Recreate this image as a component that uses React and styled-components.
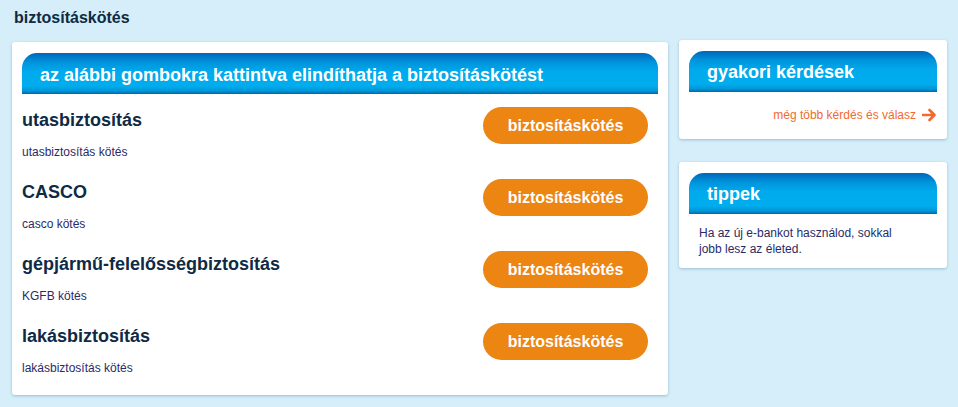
import styled, { createGlobalStyle } from "styled-components";

const GlobalStyle = createGlobalStyle`
	html, body {
		margin: 0;
		padding: 0;
		background: #d5eefa;
		font-family: "Liberation Sans", Arial, sans-serif;
	}
`;

const products = [
	{ title: "utasbiztosítás", sub: "utasbiztosítás kötés" },
	{ title: "CASCO", sub: "casco kötés" },
	{ title: "gépjármű-felelősségbiztosítás", sub: "KGFB kötés" },
	{ title: "lakásbiztosítás", sub: "lakásbiztosítás kötés" },
];

const ArrowIcon = () => (
	<svg width='15' height='14' viewBox='0 0 15 14'>
		<path
			d='M1 7h11M7.5 2l5 5-5 5'
			fill='none'
			stroke='#f26a2e'
			strokeWidth='2.6'
			strokeLinecap='round'
			strokeLinejoin='round'
		/>
	</svg>
);

const App = () => {
	return (
		<Page>
			<GlobalStyle />
			<PageTitle>biztosításkötés</PageTitle>
			<Columns>
				<MainCard>
					<BlueHeader $size='main'>
						az alábbi gombokra kattintva elindíthatja a biztosításkötést
					</BlueHeader>
					<ProductList>
						{products.map((p) => (
							<ProductRow key={p.title}>
								<ProductText>
									<ProductTitle>{p.title}</ProductTitle>
									<ProductSub>{p.sub}</ProductSub>
								</ProductText>
								<OrangeButton>biztosításkötés</OrangeButton>
							</ProductRow>
						))}
					</ProductList>
				</MainCard>
				<SideColumn>
					<SideCard>
						<BlueHeader>gyakori kérdések</BlueHeader>
						<MoreLink>
							még több kérdés és válasz <ArrowIcon />
						</MoreLink>
					</SideCard>
					<SideCard>
						<BlueHeader>tippek</BlueHeader>
						<TipText>
							Ha az új e-bankot használod, sokkal
							<br />
							jobb lesz az életed.
						</TipText>
					</SideCard>
				</SideColumn>
			</Columns>
		</Page>
	);
};

export default App;

const Page = styled.div`
	width: 958px;
	height: 407px;
	box-sizing: border-box;
	padding: 8px 0 0 12px;
`;
const PageTitle = styled.h1`
	margin: 0 0 0 2px;
	font-size: 16px;
	line-height: 20px;
	font-weight: bold;
	color: #0e2a44;
`;
const Columns = styled.div`
	display: flex;
	align-items: flex-start;
	gap: 11px;
	margin-top: 12px;
`;
const Card = styled.div`
	background: #fff;
	border-radius: 3px;
	box-shadow: 0 1px 3px rgba(90, 130, 160, 0.45);
	box-sizing: border-box;
	padding: 11px 10px;
`;
const MainCard = styled(Card)`
	width: 656px;
	height: 353px;
	margin-top: 2px;
`;
const SideColumn = styled.div`
	display: flex;
	flex-direction: column;
	gap: 23px;
`;
const SideCard = styled(Card)`
	width: 268px;
`;
const BlueHeader = styled.div`
	height: 41px;
	box-sizing: border-box;
	padding-left: 18px;
	padding-top: ${(p) => (p.$size === "main" ? "12px" : "11px")};
	border-radius: 15px 15px 0 0;
	background: linear-gradient(
		to bottom,
		#0066b8 0%,
		#0093dc 22%,
		#00aaec 45%,
		#00adee 80%,
		#0098d8 92%,
		#0068b0 100%
	);
	color: #fff;
	font-weight: bold;
	font-size: 18px;
	line-height: 20px;
	white-space: nowrap;
`;
const ProductList = styled.div`
	display: flex;
	flex-direction: column;
	gap: 12px;
	margin-top: 13px;
`;
const ProductRow = styled.div`
	display: flex;
	justify-content: space-between;
	align-items: flex-start;
	height: 60px;
	padding-right: 10px;
`;
const ProductText = styled.div`
	display: flex;
	flex-direction: column;
	padding-top: 2px;
`;
const ProductTitle = styled.div`
	font-size: 18px;
	line-height: 22px;
	font-weight: bold;
	color: #0e2a44;
`;
const ProductSub = styled.div`
	margin-top: 14px;
	font-size: 12px;
	line-height: 14px;
	color: #2c2a66;
`;
const OrangeButton = styled.button`
	all: unset;
	width: 165px;
	height: 37px;
	border-radius: 19px;
	background: #ec8512;
	color: #fff;
	font-family: "Liberation Sans", Arial, sans-serif;
	font-size: 16px;
	font-weight: bold;
	text-align: center;
	line-height: 37px;
	cursor: pointer;
`;
const MoreLink = styled.a`
	display: flex;
	justify-content: flex-end;
	align-items: center;
	gap: 6px;
	margin-top: 16px;
	margin-bottom: 6px;
	font-size: 12px;
	line-height: 14px;
	color: #f26a2e;
	cursor: pointer;
`;
const TipText = styled.p`
	margin: 11px 0 0 10px;
	font-size: 12px;
	line-height: 16px;
	color: #2c2a66;
`;
